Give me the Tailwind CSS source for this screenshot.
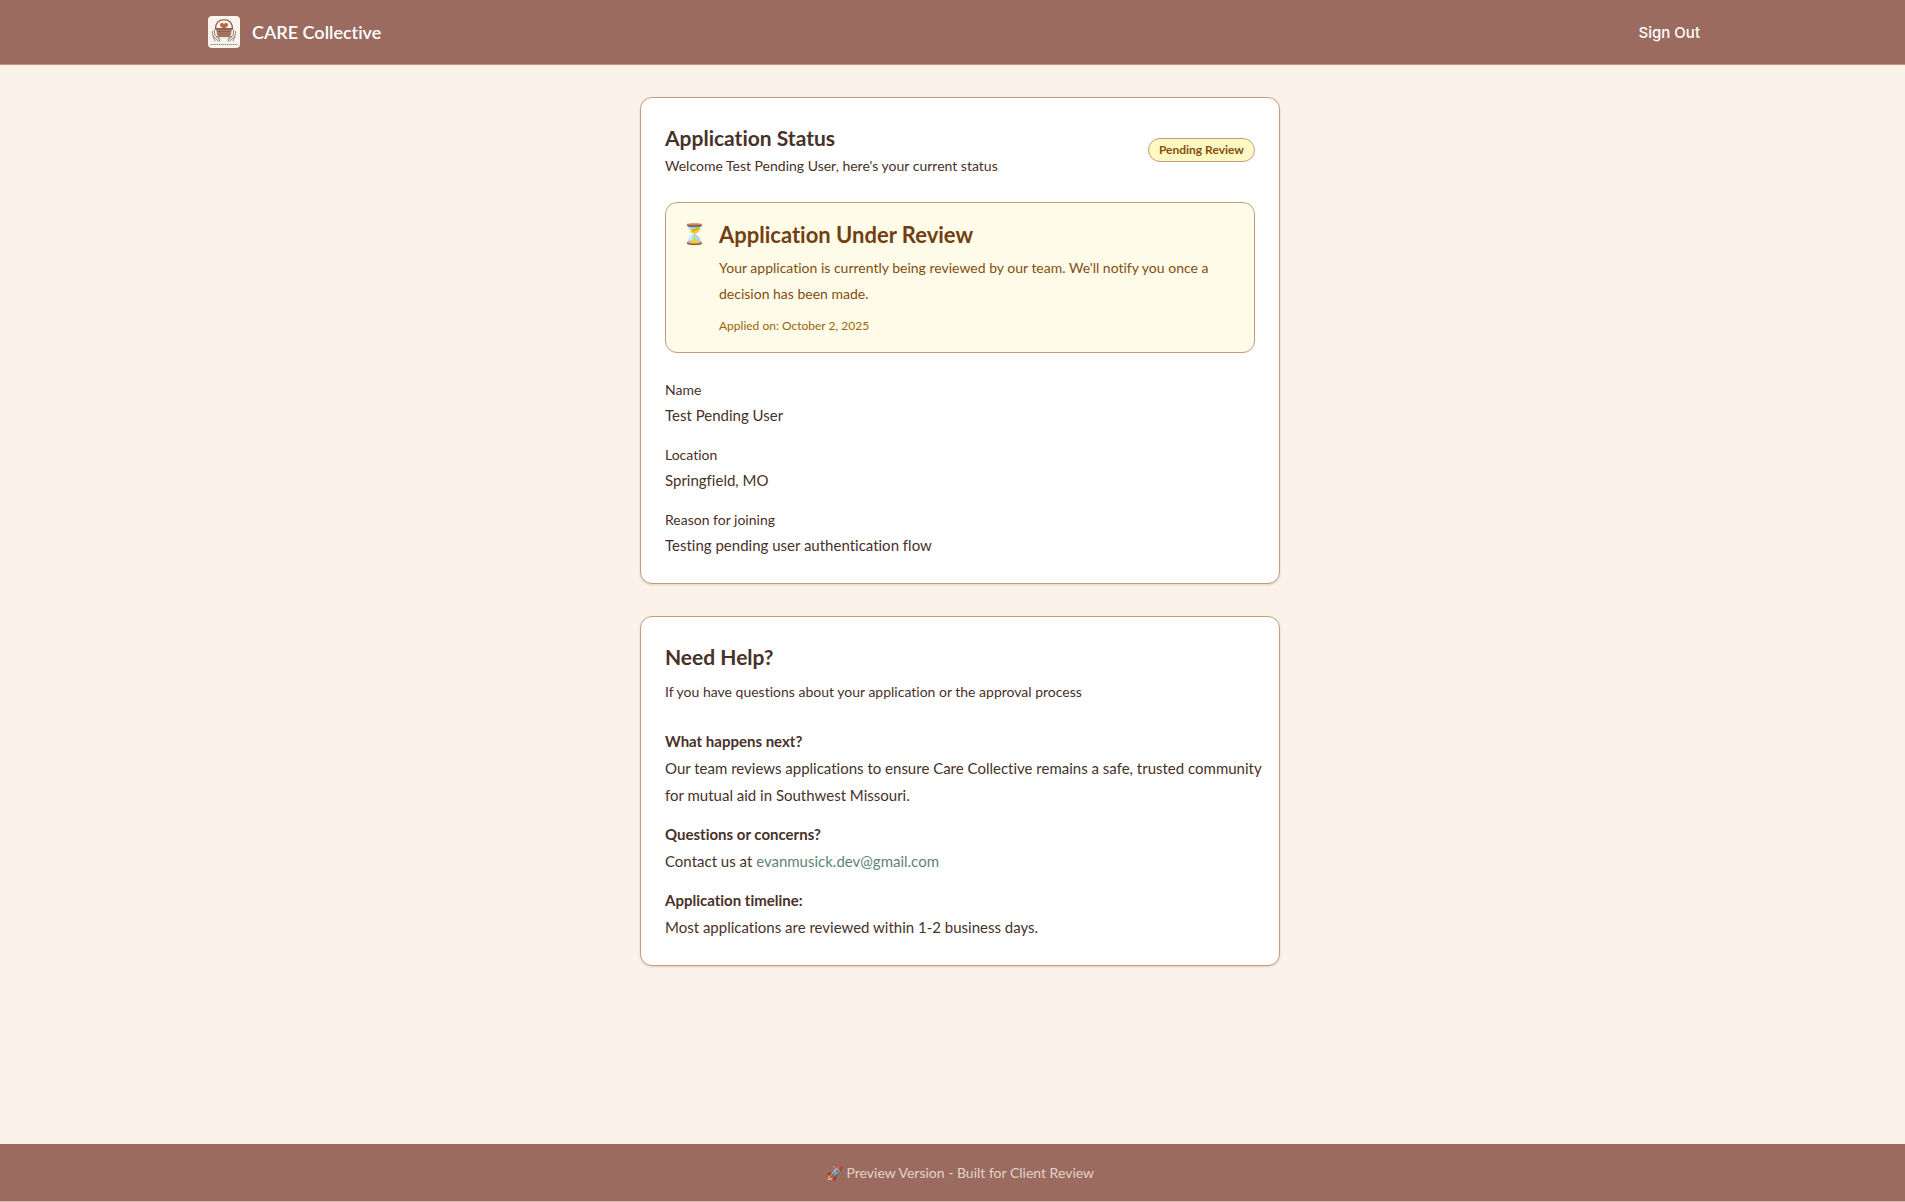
<!DOCTYPE html>
<html lang="en">
<head>
<meta charset="utf-8">
<meta name="viewport" content="width=device-width, initial-scale=1">
<title>Application Status - CARE Collective</title>
<script src="https://cdn.jsdelivr.net/npm/@tailwindcss/browser@4"></script>
</head>
<body class="flex min-h-screen flex-col bg-[#fbf2e9] font-['Lato','Noto_Sans',sans-serif] text-[15px] text-[#483129] [font-variant-ligatures:no-common-ligatures]">

<header class="border-b border-[#c39778] bg-[#9b6b60] pl-[15px] text-white">
  <div class="mx-auto flex h-16 max-w-[1536px] items-center justify-between px-4">
    <a href="#" class="flex items-center gap-3">
      <svg class="size-8 rounded" viewBox="0 0 32 32" fill="none" aria-hidden="true">
        <rect width="32" height="32" fill="#fbf2e9"/>
        <path d="M7.500 13C7.500 7 10.800 3.700 16 3.700S24.500 7 24.500 13" stroke="#6b5650" stroke-width="1.100"/>
        <path d="M8 12.800h16l-1.500 8h-13Z" fill="#b07d62"/>
        <path d="M7 12.800h18" stroke="#5f463d" stroke-width="1.200"/>
        <path d="M9 15.500h14M9.500 18h13M9.800 20.700h12.400" stroke="#7d594b" stroke-width=".7"/>
        <path d="M12.500 13v7.500M16 13v7.500M19.500 13v7.500" stroke="#8c6554" stroke-width=".5"/>
        <path d="M16 12.700c-2.800-1.300-4-2.400-4-3.900 0-2.100 2.800-2.500 4-.9 1.200-1.600 4-1.200 4 .9 0 1.500-1.200 2.600-4 3.900Z" fill="#cb5f3e"/>
        <path d="M4.500 15.500c0 3 .3 4.500 2 6L10 25M6.300 14l.5 5 4.200 4.500.8 2M8.500 20.500l3.500 2.500M27.500 15.500c0 3-.3 4.500-2 6L22 25M25.700 14l-.5 5-4.200 4.500-.8 2M23.500 20.500 20 23M5 20.500l2 4.500M27 20.500 25 25" stroke="#756b66" stroke-width=".8" stroke-linecap="round"/>
        <path d="M2.500 28.500h27" stroke="#8c807a" stroke-width=".9" stroke-dasharray="1.500 .5"/>
      </svg>
      <span class="text-lg font-semibold">CARE Collective</span>
    </a>
    <button type="button" class="px-3 pt-2.5 pb-2 font-['Inter',sans-serif] text-[15px] font-medium">Sign Out</button>
  </div>
</header>

<main class="flex-1 pl-[15px]">
  <div class="mx-auto flex max-w-[640px] flex-col gap-8 py-8">

    <section class="rounded-xl border border-[#c99b7d] bg-white p-6 shadow-sm">
      <div class="flex items-center justify-between">
        <div>
          <h1 class="text-[21px] leading-8 font-bold">Application Status</h1>
          <p class="text-sm leading-6">Welcome Test Pending User, here's your current status</p>
        </div>
        <span class="rounded-full border border-[#c99b7d] bg-[#fef9c3] px-2.5 text-xs leading-[22px] font-bold text-[#854d0e]">Pending Review</span>
      </div>

      <div class="mt-6 flex gap-3 rounded-xl border border-[#c99b7d] bg-[#fefce8] p-4">
        <span class="w-[25px] text-center text-xl leading-7">⏳</span>
        <div>
          <h2 class="text-[22px] leading-8 font-bold text-[#713f12]">Application Under Review</h2>
          <p class="mt-1 text-sm leading-[26px] text-[#854d0e]">Your application is currently being reviewed by our team. We'll notify you once a decision has been made.</p>
          <p class="mt-2 text-xs leading-[21px] text-[#a16207]">Applied on: October 2, 2025</p>
        </div>
      </div>

      <dl class="mt-6 flex flex-col gap-[13px]">
        <div>
          <dt class="text-sm leading-[25px]">Name</dt>
          <dd class="leading-[27px]">Test Pending User</dd>
        </div>
        <div>
          <dt class="text-sm leading-[25px]">Location</dt>
          <dd class="leading-[27px]">Springfield, MO</dd>
        </div>
        <div>
          <dt class="text-sm leading-[25px]">Reason for joining</dt>
          <dd class="leading-[27px]">Testing pending user authentication flow</dd>
        </div>
      </dl>
    </section>

    <section class="rounded-xl border border-[#c99b7d] bg-white p-6 shadow-sm">
      <h2 class="text-[21px] leading-8 font-bold">Need Help?</h2>
      <p class="mt-1.5 text-sm leading-[25px]">If you have questions about your application or the approval process</p>

      <div class="mt-6 flex flex-col gap-3 leading-[27px]">
        <div>
          <h3 class="font-bold">What happens next?</h3>
          <p class="-mr-4">Our team reviews applications to ensure Care Collective remains a safe, trusted community for mutual aid in Southwest Missouri.</p>
        </div>
        <div>
          <h3 class="font-bold">Questions or concerns?</h3>
          <p>Contact us at <a href="mailto:evanmusick.dev@gmail.com" class="text-[#5f8377]">evanmusick.dev@gmail.com</a></p>
        </div>
        <div>
          <h3 class="font-bold">Application timeline:</h3>
          <p>Most applications are reviewed within 1-2 business days.</p>
        </div>
      </div>
    </section>

  </div>
</main>

<footer class="border-b border-[#d5bdb2] bg-[#9b6b60] py-4 pl-[15px] text-center text-sm leading-[25px] text-[#fbf2e9]">
  <p class="opacity-75">🚀 Preview Version - Built for Client Review</p>
</footer>

</body>
</html>
